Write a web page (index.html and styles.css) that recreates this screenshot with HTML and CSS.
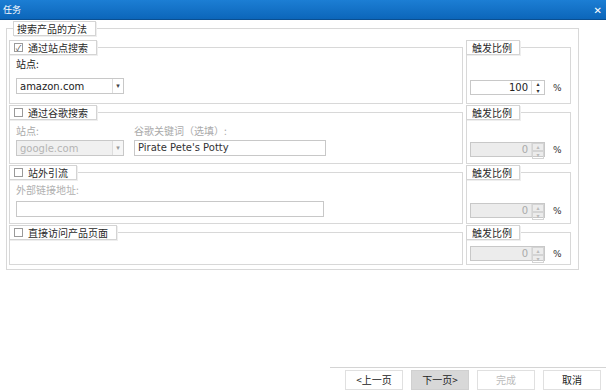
FILE: index.html
```html
<!DOCTYPE html>
<html>
<head>
<meta charset="utf-8">
<link rel="stylesheet" href="styles.css">
</head>
<body>
<div class="window">
  <div class="titlebar">
    <span class="title">任务</span>
    <span class="close">✕</span>
  </div>
  <div class="content">
    <fieldset class="outer">
      <legend class="lg">搜索产品的方法</legend>
      <div class="row r1">
        <fieldset class="left">
          <legend class="lg"><span class="cb checked">✓</span>通过站点搜索</legend>
          <div class="lbl">站点:</div>
          <div class="select"><span class="val">amazon.com</span><span class="arrow">▾</span></div>
        </fieldset>
        <fieldset class="right">
          <legend class="lg">触发比例</legend>
          <div class="spin-row"><div class="spin"><span class="num">100</span><span class="btns"><i>▴</i><i>▾</i></span></div><span class="pct">%</span></div>
        </fieldset>
      </div>
      <div class="row r2">
        <fieldset class="left">
          <legend class="lg"><span class="cb"></span>通过谷歌搜索</legend>
          <div class="two">
            <div class="col">
              <div class="lbl dis">站点:</div>
              <div class="select disabled"><span class="val">google.com</span><span class="arrow">▾</span></div>
            </div>
            <div class="col wide">
              <div class="lbl dis">谷歌关键词（选填）:</div>
              <div class="input">Pirate Pete's Potty</div>
            </div>
          </div>
        </fieldset>
        <fieldset class="right">
          <legend class="lg">触发比例</legend>
          <div class="spin-row"><div class="spin disabled"><span class="num">0</span><span class="btns"><i>▴</i><i>▾</i></span></div><span class="pct">%</span></div>
        </fieldset>
      </div>
      <div class="row r3">
        <fieldset class="left">
          <legend class="lg"><span class="cb"></span>站外引流</legend>
          <div class="lbl dis">外部链接地址:</div>
          <div class="input long"></div>
        </fieldset>
        <fieldset class="right">
          <legend class="lg">触发比例</legend>
          <div class="spin-row"><div class="spin disabled"><span class="num">0</span><span class="btns"><i>▴</i><i>▾</i></span></div><span class="pct">%</span></div>
        </fieldset>
      </div>
      <div class="row r4">
        <fieldset class="left">
          <legend class="lg"><span class="cb"></span>直接访问产品页面</legend>
        </fieldset>
        <fieldset class="right">
          <legend class="lg">触发比例</legend>
          <div class="spin-row"><div class="spin disabled"><span class="num">0</span><span class="btns"><i>▴</i><i>▾</i></span></div><span class="pct">%</span></div>
        </fieldset>
      </div>
    </fieldset>
  </div>
  <div class="footer">
    <button class="btn">&lt;上一页</button>
    <button class="btn active">下一页&gt;</button>
    <button class="btn dis">完成</button>
    <button class="btn">取消</button>
  </div>
</div>
</body>
</html>
```
FILE: styles.css
```css
* { box-sizing: border-box; }
html, body { margin: 0; padding: 0; background: #fff; }
body {
  font-family: "Noto Sans CJK SC", "DejaVu Sans", sans-serif;
  font-size: 10px;
  color: #222;
  width: 606px;
  height: 392px;
  overflow: hidden;
}
.window { width: 606px; height: 392px; display: flex; flex-direction: column; }
.titlebar {
  height: 20px;
  background: linear-gradient(#1c7ed4, #0c66ba);
  border-bottom: 1px solid #0a4f92;
  display: flex;
  align-items: center;
  justify-content: space-between;
  padding: 0 4px 0 3px;
  color: #fff;
}
.title { font-size: 9px; line-height: 1; }
.close { font-size: 10px; font-weight: bold; }
.content { flex: 1; padding: 1px 27px 0 6px; }
fieldset {
  margin: 0;
  padding: 0;
  border: 1px solid #d8d8d8;
  min-width: 0;
}
.lg {
  border: 1px solid #d4d4d4;
  background: #fff;
  padding: 0 8px 0 3px;
  line-height: 12px;
  height: 15px;
  display: flex;
  align-items: center;
  color: #2a2a2a;
  box-shadow: 1px 1px 0 #eee;
}
.outer { padding: 4px 7px 2px 2px; height: 249px; }
.outer > .lg { margin-left: 4px; }
.row { display: flex; gap: 3px; }
.row + .row { margin-top: 1px; }
.left { flex: 1; padding: 0 8px 0 6px; }
.right { width: 105px; padding: 0 4px 0 3px; display: flex; flex-direction: column; justify-content: flex-end; }
.left > .lg { margin-left: -7px; }
.right > .lg { margin-left: -4px; padding: 0 7px 0 5px; }
.r1 > fieldset { height: 64px; }
.r2 > fieldset { height: 59px; }
.r3 > fieldset { height: 59px; }
.r4 > fieldset { height: 40px; }
.cb {
  width: 9px; height: 9px;
  border: 1px solid #9a9a9a;
  background: #fff;
  display: inline-flex; align-items: center; justify-content: center;
  font-size: 8px; color: #444; margin: 0 5px 0 1px; line-height: 1;
}
.lbl { margin-top: 3px; line-height: 12px; }
.lbl.dis { color: #aaa; }
.select {
  margin-top: 8px;
  width: 108px; height: 16px;
  border: 1px solid #c8c8c8;
  display: flex; align-items: center;
  font-family: "DejaVu Sans", sans-serif; font-size: 10px;
  background: #fff;
}
.select .val { flex: 1; padding-left: 3px; }
.select .arrow { width: 11px; height: 100%; border-left: 1px solid #ddd; font-size: 7px; display: flex; align-items: center; justify-content: center; color: #444; }
.select.disabled { background: #f0f0f0; color: #b4b4b4; }
.select.disabled .arrow { color: #999; background: #f6f6f6; }
.two { display: flex; gap: 10px; }
.two .lbl { margin-top: 5px; }
.two .select { margin-top: 3px; }
.col.wide { flex: 1; padding-right: 130px; }
.input {
  margin-top: 3px;
  height: 16px;
  border: 1px solid #c8c8c8;
  font-family: "DejaVu Sans", sans-serif; font-size: 10px;
  padding-left: 3px; line-height: 14px;
  width: 192px;
  color: #333;
}
.input.long { width: 308px; margin-top: 5px; }
.r3 .lbl { margin-top: 4px; color: #b0b0b0; }
.spin-row { display: flex; align-items: center; }
.spin {
  width: 75px; height: 15px;
  border: 1px solid #c8c8c8;
  display: flex;
  font-family: "DejaVu Sans", sans-serif; font-size: 10px;
  background: #fff;
}
.spin .num { flex: 1; text-align: right; padding-right: 3px; line-height: 13px; }
.spin .btns { width: 13px; border-left: 1px solid #ddd; display: flex; flex-direction: column; }
.spin .btns i { flex: 1; font-style: normal; font-size: 6px; line-height: 6px; text-align: center; color: #333; }
.spin.disabled { background: #ececec; color: #aaa; }
.spin.disabled .btns i { color: #bbb; border: 1px solid #d4d4d4; }
.pct { margin-left: 8px; font-family: "DejaVu Sans", sans-serif; font-size: 9px; color: #333; }
.r1 .spin-row { margin-bottom: 8px; }
.r2 .spin-row { margin-bottom: 6px; }
.r3 .spin-row { margin-bottom: 5px; }
.r4 .spin-row { margin-bottom: 3px; }
.footer {
  height: 24px;
  border-top: 1px solid #d4d4d4;
  margin-left: 330px;
  display: flex;
  align-items: center;
  gap: 8px;
  padding-left: 15px;
  margin-bottom: 1px;
}
.btn {
  width: 58px; height: 20px;
  border: 1px solid #e0e0e0;
  background: #fff;
  font-family: "Noto Sans CJK SC", sans-serif;
  font-size: 10px;
  color: #222;
  padding: 0;
}
.btn.active { background: #d8d8d8; border-color: #d0d0d0; }
.btn.dis { color: #bbb; }
```
